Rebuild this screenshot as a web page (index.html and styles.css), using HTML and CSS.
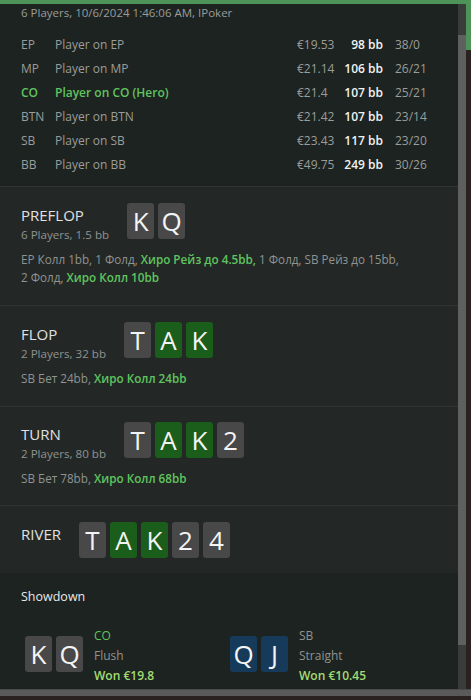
FILE: index.html
```html
<!DOCTYPE html>
<html>
<head>
<meta charset="utf-8">
<link rel="stylesheet" href="styles.css">
</head>
<body>
<div class="topbar"></div>
<div class="frame">
  <div class="panel">
    <section class="info">
      <div class="meta">6 Players, 10/6/2024 1:46:06 AM, IPoker</div>
      <div class="players">
        <div class="prow"><span class="pos">EP</span><span class="pname">Player on EP</span><span class="stack">€19.53</span><span class="bb">98 bb</span><span class="stat">38/0</span></div>
        <div class="prow"><span class="pos">MP</span><span class="pname">Player on MP</span><span class="stack">€21.14</span><span class="bb">106 bb</span><span class="stat">26/21</span></div>
        <div class="prow hero"><span class="pos">CO</span><span class="pname">Player on CO (Hero)</span><span class="stack">€21.4</span><span class="bb">107 bb</span><span class="stat">25/21</span></div>
        <div class="prow"><span class="pos">BTN</span><span class="pname">Player on BTN</span><span class="stack">€21.42</span><span class="bb">107 bb</span><span class="stat">23/14</span></div>
        <div class="prow"><span class="pos">SB</span><span class="pname">Player on SB</span><span class="stack">€23.43</span><span class="bb">117 bb</span><span class="stat">23/20</span></div>
        <div class="prow"><span class="pos">BB</span><span class="pname">Player on BB</span><span class="stack">€49.75</span><span class="bb">249 bb</span><span class="stat">30/26</span></div>
      </div>
    </section>

    <section class="street">
      <div class="shead">
        <div class="stitle"><div class="sname">PREFLOP</div><div class="ssub">6 Players, 1.5 bb</div></div>
        <div class="cards"><span class="card">K</span><span class="card">Q</span></div>
      </div>
      <div class="actions">EP Колл 1bb, 1 Фолд, <b class="hact">Хиро Рейз до 4.5bb,</b> 1 Фолд, SB Рейз до 15bb, 2 Фолд, <b class="hact">Хиро Колл 10bb</b></div>
    </section>

    <section class="street">
      <div class="shead">
        <div class="stitle"><div class="sname">FLOP</div><div class="ssub">2 Players, 32 bb</div></div>
        <div class="cards"><span class="card">T</span><span class="card green">A</span><span class="card green">K</span></div>
      </div>
      <div class="actions">SB Бет 24bb, <b class="hact">Хиро Колл 24bb</b></div>
    </section>

    <section class="street turn">
      <div class="shead">
        <div class="stitle"><div class="sname">TURN</div><div class="ssub">2 Players, 80 bb</div></div>
        <div class="cards"><span class="card">T</span><span class="card green">A</span><span class="card green">K</span><span class="card">2</span></div>
      </div>
      <div class="actions">SB Бет 78bb, <b class="hact">Хиро Колл 68bb</b></div>
    </section>

    <section class="street river">
      <div class="shead">
        <div class="stitle"><div class="sname">RIVER</div></div>
        <div class="cards"><span class="card">T</span><span class="card green">A</span><span class="card green">K</span><span class="card">2</span><span class="card">4</span></div>
      </div>
    </section>

    <section class="showdown">
      <div class="sdtitle">Showdown</div>
      <div class="hands">
        <div class="hand">
          <div class="cards"><span class="card">K</span><span class="card">Q</span></div>
          <div class="hinfo"><div class="hpos win">CO</div><div class="hrank">Flush</div><div class="hwon">Won €19.8</div></div>
        </div>
        <div class="hand">
          <div class="cards"><span class="card blue">Q</span><span class="card blue">J</span></div>
          <div class="hinfo"><div class="hpos">SB</div><div class="hrank">Straight</div><div class="hwon">Won €10.45</div></div>
        </div>
      </div>
    </section>
  </div>
  <div class="vscroll"><div class="vthumb"></div></div>
  <div class="edge"></div>
</div>
<div class="hscroll"></div>
</body>
</html>
```
FILE: styles.css
```css
* { box-sizing: border-box; }
html, body { margin: 0; padding: 0; }
body {
  width: 471px;
  height: 700px;
  overflow: hidden;
  background: #2a2220;
  font-family: "Open Sans", "Noto Sans", sans-serif;
  color: #9a9d9b;
}
.topbar { height: 4px; background: #4e9458; }
.frame { display: flex; height: 685px; }
.panel {
  width: 458px;
  background: #1d2320;
  display: flex;
  flex-direction: column;
  overflow: hidden;
}
.vscroll { width: 8px; background: #393c3b; display: flex; flex-direction: column; padding-top: 31px; }
.vthumb { height: 610px; background: #5e5f5f; }
.edge { flex: 1; background: linear-gradient(#4e9458 0 46px, #2a2220 46px); }
.hscroll { height: 7px; background: #5a5a5a; border-top: 1px solid #4a4a4a; }

.info { padding: 0 21px 10px 21px; border-bottom: 1px solid #303533; }
.meta { font-size: 11.5px; line-height: 18px; color: #9a9d9b; white-space: nowrap; }
.players { margin-top: 10px; display: flex; flex-direction: column; }
.prow { display: flex; align-items: center; height: 24px; font-size: 12px; white-space: nowrap; }
.pos { width: 34px; flex: none; }
.pname { width: 242px; flex: none; }
.stack { width: 40px; flex: none; }
.bb { width: 46px; flex: none; text-align: right; color: #f2f2f2; font-weight: 600; }
.stat { margin-left: 12px; }
.hero .pos, .hero .pname { color: #5fc45f; font-weight: 600; }

.street { background: #232826; padding: 16px 52px 19px 21px; border-bottom: 1px solid #303533; }
.street.turn { padding-top: 15px; padding-bottom: 18px; }
.shead { display: flex; align-items: flex-start; gap: 18px; }
.stitle { padding-top: 2px; }
.sname { font-size: 15px; color: #e0e0e0; line-height: 20px; }
.ssub { font-size: 11.6px; color: #8f9391; line-height: 19px; white-space: nowrap; }
.cards { display: flex; gap: 4px; }
.card {
  width: 27px; height: 36px;
  background: #484848;
  border-radius: 3px;
  color: #f4f4f4;
  font-size: 26px;
  display: flex; align-items: center; justify-content: center;
}
.card.green { background: #1b5e1b; }
.card.blue { background: #163a5a; }
.actions { margin-top: 6px; font-size: 11.7px; line-height: 18px; color: #8f9391; }
.hact { color: #5fc45f; font-weight: 600; }
.river { border-bottom: none; padding-top: 16px; padding-bottom: 15px; }

.showdown { flex: 1; padding: 15px 21px 0 21px; background: #1d2320; }
.sdtitle { font-size: 12.5px; line-height: 18px; color: #e8e8e8; }
.hands { display: flex; margin-top: 20px; padding-left: 4px; }
.hand { width: 205px; display: flex; gap: 11px; align-items: flex-start; }
.hand .cards { margin-top: 10px; }
.hinfo { font-size: 12px; line-height: 20px; color: #8f9391; white-space: nowrap; }
.hpos.win { color: #5fc45f; }
.hwon { color: #a3dc72; font-weight: 600; }
```
